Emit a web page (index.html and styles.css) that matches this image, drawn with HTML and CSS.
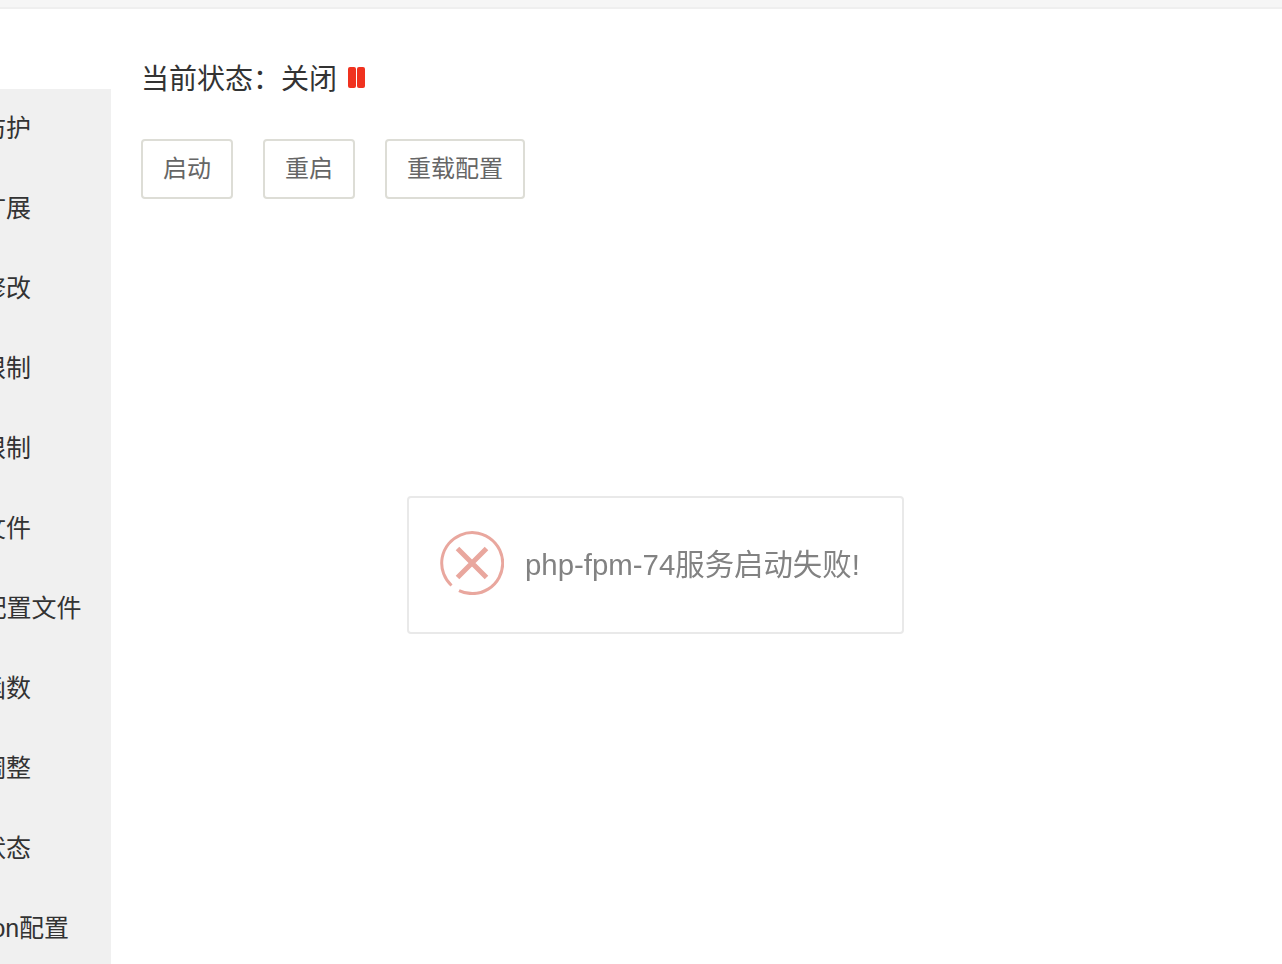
FILE: index.html
```html
<!DOCTYPE html>
<html lang="zh-CN">

<head>
    <meta charset="UTF-8" />
    <title>PHP管理</title>
    <link rel="stylesheet" href="styles.css">
</head>

<body>
    <div class="top-bar"></div>

    <div class="layout">
        <ul class="side-menu">
            <li>安全防护</li>
            <li>安装扩展</li>
            <li>配置修改</li>
            <li>上传限制</li>
            <li>超时限制</li>
            <li>配置文件</li>
            <li><span class="fpm">FPM</span>配置文件</li>
            <li>禁用函数</li>
            <li>性能调整</li>
            <li>负载状态</li>
            <li><span class="session">Session</span>配置</li>
        </ul>

        <div class="content">
            <div class="status">
                <span>当前状态：</span><span>关闭</span>
                <span class="pause-icon"><i></i><i></i></span>
            </div>
            <div class="actions">
                <button class="btn">启动</button>
                <button class="btn">重启</button>
                <button class="btn">重载配置</button>
            </div>
        </div>
    </div>

    <div class="message">
        <svg class="message-icon" viewBox="0 0 64 64" width="64" height="64">
            <path d="M11.5 54.5A30.5 30.5 0 1 1 19 59.6" fill="none" stroke="#e9a79e" stroke-width="3" />
            <path d="M17.500 17.500L46.500 46.500M46.500 17.500L17.500 46.500" fill="none" stroke="#e9a79e" stroke-width="5" />
        </svg>
        <span class="message-text">php-fpm-74服务启动失败!</span>
    </div>
</body>

</html>
```

FILE: styles.css
```css
* {
    box-sizing: border-box;
}

html,
body {
    height: 100%;
}

body {
    margin: 0;
    overflow: hidden;
    background: #fff;
    color: #333;
    font-family: "Liberation Sans", "Noto Sans CJK SC", sans-serif;
}

.top-bar {
    height: 9px;
    background: #f6f6f6;
    border-bottom: 2px solid #efefef;
}

.layout {
    display: flex;
    height: calc(100% - 9px);
}

.side-menu {
    flex: 0 0 111px;
    margin: 80px 0 0;
    padding: 0;
    overflow: hidden;
    background: #f0f0f0;
    list-style: none;
}

.side-menu li {
    width: 300px;
    height: 80px;
    margin-left: -69px;
    font-size: 25px;
    line-height: 78px;
    white-space: nowrap;
}

.fpm {
    letter-spacing: -0.8px;
}

.session {
    letter-spacing: -0.15px;
}

.content {
    flex: 1;
    padding: 48px 0 0 30px;
}

.status {
    display: flex;
    align-items: center;
    height: 40px;
    font-size: 28px;
    color: #333;
}

.pause-icon {
    display: flex;
    gap: 1px;
    margin-left: 11px;
}

.pause-icon i {
    width: 8px;
    height: 21px;
    border-radius: 2px;
    background: #f0321f;
}

.actions {
    display: flex;
    gap: 30px;
    margin-top: 42px;
}

.btn {
    height: 60px;
    padding: 0 20px 6px;
    border: 2px solid #ddddd6;
    border-radius: 4px;
    background: #fff;
    color: #666;
    font-family: inherit;
    font-size: 24px;
}

.message {
    position: absolute;
    left: 407px;
    top: 496px;
    display: flex;
    align-items: center;
    gap: 21px;
    width: 497px;
    height: 138px;
    padding-left: 31px;
    border: 2px solid #e9e9e9;
    border-radius: 4px;
    background: #fff;
}

.message-icon {
    margin-bottom: 4px;
    filter: blur(0.6px);
}

.message-text {
    margin-bottom: 7px;
    color: #828282;
    font-size: 29.4px;
    white-space: nowrap;
    filter: blur(0.3px);
}
```
